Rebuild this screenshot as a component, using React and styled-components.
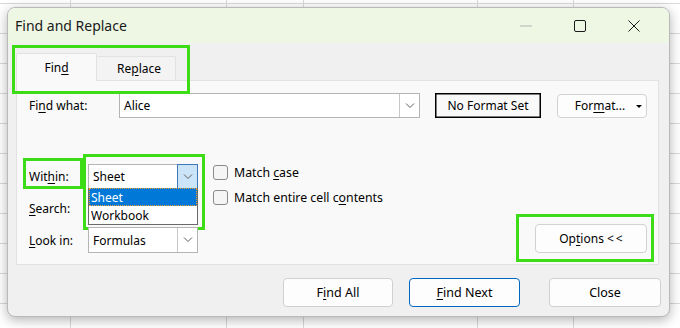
import React from 'react'
import styled, { createGlobalStyle } from 'styled-components'

const GREEN = '#3cdc17'
const FONT = '"Noto Sans", "Open Sans", "DejaVu Sans", sans-serif'

const Global = createGlobalStyle`
    html, body {
        margin: 0;
        padding: 0;
        background: #fff;
    }
    * {
        box-sizing: border-box;
    }
`

const Chevron = () => (
    <svg width='10' height='6' viewBox='0 0 10 6'>
        <polyline points='1,0.5 5,4.5 9,0.5' fill='none' stroke='#5f5f5f' strokeWidth='1' />
    </svg>
)

const App = () => {
    return (
        <Page>
            <Global />
            <Dialog>
                <TitleBar>
                    <Title>Find and Replace</Title>
                    <WinButton>
                        <svg width='12' height='2' viewBox='0 0 12 2'>
                            <line x1='0' y1='1' x2='12' y2='1' stroke='#b3b3b3' strokeWidth='1' />
                        </svg>
                    </WinButton>
                    <WinButton>
                        <svg width='12' height='12' viewBox='0 0 12 12'>
                            <rect x='0.5' y='0.5' width='11' height='11' rx='1.5' fill='none' stroke='#1a1a1a' strokeWidth='1' />
                        </svg>
                    </WinButton>
                    <WinButton last>
                        <svg width='12' height='12' viewBox='0 0 12 12'>
                            <path d='M0.5 0.5 L11.5 11.5 M11.5 0.5 L0.5 11.5' stroke='#1a1a1a' strokeWidth='1' />
                        </svg>
                    </WinButton>
                </TitleBar>

                <Body>
                    <TabStrip>
                        <Tab active>Fin<U>d</U></Tab>
                        <Tab>Re<U>p</U>lace</Tab>
                    </TabStrip>

                    <Panel>
                        <FindRow>
                            <Label width='90px'>Fi<U>n</U>d what:</Label>
                            <Combo width='301px' height='25px'>
                                <ComboValue>Alice</ComboValue>
                                <Arrow><Chevron /></Arrow>
                            </Combo>
                            <NoFormat>No Format Set</NoFormat>
                            <FormatButton>
                                <span>For<U>m</U>at...</span>
                                <Caret />
                            </FormatButton>
                        </FindRow>

                        <Lower>
                            <Fields>
                                <BoxedLabel>Wit<U>h</U>in:</BoxedLabel>
                                <Combo width='110px' height='25px' boxed>
                                    <ComboValue>Sheet</ComboValue>
                                    <Arrow open><Chevron /></Arrow>
                                    <List>
                                        <Item selected>Sheet</Item>
                                        <Item>Workbook</Item>
                                    </List>
                                </Combo>

                                <Label><U>S</U>earch:</Label>
                                <Combo width='110px' height='26px'>
                                    <ComboValue />
                                    <Arrow><Chevron /></Arrow>
                                </Combo>

                                <Label><U>L</U>ook in:</Label>
                                <Combo width='110px' height='26px'>
                                    <ComboValue>Formulas</ComboValue>
                                    <Arrow><Chevron /></Arrow>
                                </Combo>
                            </Fields>

                            <Checks>
                                <CheckRow>
                                    <Box />
                                    <span>Match <U>c</U>ase</span>
                                </CheckRow>
                                <CheckRow>
                                    <Box />
                                    <span>Match entire cell c<U>o</U>ntents</span>
                                </CheckRow>
                            </Checks>

                            <OptionsButton>Op<U>t</U>ions &lt;&thinsp;&lt;</OptionsButton>
                        </Lower>
                    </Panel>

                    <Footer>
                        <Button width='110px'>F<U>i</U>nd All</Button>
                        <Button width='111px' gap='16px' primary><U>F</U>ind Next</Button>
                        <Button width='112px' gap='29px'>Close</Button>
                    </Footer>
                </Body>
            </Dialog>
        </Page>
    )
}

export default App


const Page = styled.div`
    width: 680px;
    height: 328px;
    overflow: hidden;
    padding: 7px 0 0 7px;
    background-color: #fff;
    background-image:
        linear-gradient(to right,
            transparent 0 70px, #d9d9d9 70px 71px,
            transparent 71px 226px, #d9d9d9 226px 227px,
            transparent 227px 303px, #d9d9d9 303px 304px,
            transparent 304px 477px, #d9d9d9 477px 478px,
            transparent 478px 573px, #d9d9d9 573px 574px,
            transparent 574px),
        repeating-linear-gradient(to bottom,
            transparent 0 3px, #d9d9d9 3px 4px, transparent 4px 30px);
`

const Dialog = styled.div`
    width: 663px;
    height: 310px;
    display: flex;
    flex-direction: column;
    border: 1px solid #b9b9b9;
    border-radius: 8px;
    overflow: hidden;
    background: #f0f0f0;
    box-shadow: 0 3px 12px rgba(0, 0, 0, 0.3);
    font-family: ${FONT};
    font-size: 12px;
    color: #000;
`

const TitleBar = styled.div`
    height: 35px;
    flex-shrink: 0;
    display: flex;
    align-items: center;
    padding-left: 7px;
    background: #eef7e4;
`

const Title = styled.div`
    flex: 1;
    font-size: 14px;
    color: #1a1a1a;
`

const WinButton = styled.div`
    width: 54px;
    height: 35px;
    display: flex;
    align-items: center;
    justify-content: center;
    margin-right: ${(p) => (p.last ? '8px' : '0')};
`

const Body = styled.div`
    flex: 1;
    display: flex;
    flex-direction: column;
    padding: 10px 10px 9px 8px;
`

const TabStrip = styled.div`
    position: relative;
    z-index: 1;
    height: 27px;
    display: flex;
    align-items: flex-end;

    &::after {
        content: '';
        position: absolute;
        left: -4px;
        top: -8px;
        width: 172px;
        height: 43px;
        border: 3px solid ${GREEN};
        pointer-events: none;
    }
`

const Tab = styled.div`
    width: ${(p) => (p.active ? '81px' : '79px')};
    height: ${(p) => (p.active ? '28px' : '24px')};
    margin-bottom: ${(p) => (p.active ? '-1px' : '0')};
    display: flex;
    align-items: center;
    justify-content: center;
    padding-left: ${(p) => (p.active ? '0' : '6px')};
    background: ${(p) => (p.active ? '#f9f9f9' : '#f3f3f3')};
    border: 1px solid #e2e2e2;
    border-bottom: none;
    border-left: ${(p) => (p.active ? '1px solid #e2e2e2' : 'none')};
    border-radius: 2px 2px 0 0;
    font-size: 12px;
`

const U = styled.span`
    text-decoration: underline;
    text-underline-offset: 2px;
`

const Panel = styled.div`
    height: 185px;
    display: flex;
    flex-direction: column;
    padding: 12px 11px 11px 12px;
    background: #f9f9f9;
    border: 1px solid #e2e2e2;
`

const FindRow = styled.div`
    display: flex;
    align-items: center;
    height: 25px;
`

const Label = styled.div`
    width: ${(p) => p.width || 'auto'};
    display: flex;
    align-items: center;
    white-space: nowrap;
`

const BoxedLabel = styled(Label)`
    position: relative;

    &::after {
        content: '';
        position: absolute;
        left: -6px;
        top: -6px;
        width: 54px;
        bottom: 0;
        border: 3px solid ${GREEN};
    }
`

const Combo = styled.div`
    position: relative;
    width: ${(p) => p.width};
    height: ${(p) => p.height};
    display: flex;
    background: #fff;
    border: 1px solid #b4b4b4;

    ${(p) => p.boxed && `
        &::after {
            content: '';
            position: absolute;
            left: -6px;
            top: -11px;
            right: -8px;
            bottom: -42px;
            border: 3px solid ${GREEN};
            pointer-events: none;
        }
    `}
`

const ComboValue = styled.div`
    flex: 1;
    display: flex;
    align-items: center;
    padding-left: 4px;
    white-space: nowrap;
    overflow: hidden;
`

const Arrow = styled.div`
    width: 20px;
    display: flex;
    align-items: center;
    justify-content: center;
    border-left: 1px solid #c8c8c8;
    ${(p) => p.open && `
        margin: -1px -1px -1px 0;
        width: 21px;
        background: #cce4f7;
        border: 1px solid #3d79b8;
    `}
`

const List = styled.div`
    position: absolute;
    z-index: 3;
    left: -1px;
    right: -1px;
    top: 100%;
    height: 37px;
    background: #fff;
    border: 1px solid #6a6a6a;
    border-top: none;
`

const Item = styled.div`
    height: 18px;
    display: flex;
    align-items: center;
    padding-left: 2px;
    color: ${(p) => (p.selected ? '#fff' : '#000')};
    background: ${(p) => (p.selected ? '#0078d7' : 'transparent')};
    outline: ${(p) => (p.selected ? '1px dotted #f0a030' : 'none')};
    outline-offset: -1px;
`

const NoFormat = styled.div`
    width: 106px;
    height: 25px;
    margin-left: 15px;
    display: flex;
    align-items: center;
    justify-content: center;
    border: 1px solid #000;
    box-shadow: inset 0 0 0 0.5px #000;
    white-space: nowrap;
`

const FormatButton = styled.div`
    position: relative;
    width: 90px;
    height: 24px;
    margin-left: 16px;
    display: flex;
    align-items: center;
    justify-content: center;
    padding-right: 4px;
    background: #fdfdfd;
    border: 1px solid #d2d2d2;
    border-radius: 4px;
`

const Caret = styled.span`
    position: absolute;
    right: 4px;
    top: 10px;
    width: 0;
    height: 0;
    border-left: 3px solid transparent;
    border-right: 3px solid transparent;
    border-top: 3px solid #000;
`

const Lower = styled.div`
    margin-top: auto;
    display: flex;
    align-items: flex-end;
`

const Fields = styled.div`
    display: grid;
    grid-template-columns: 59px 110px;
    grid-template-rows: 25px 26px 26px;
    row-gap: 6px;
    align-items: stretch;
`

const Checks = styled.div`
    align-self: flex-start;
    margin-left: 15px;
    margin-top: 1px;
    display: flex;
    flex-direction: column;
    gap: 10px;
`

const CheckRow = styled.div`
    display: flex;
    align-items: center;
    gap: 6px;
    height: 15px;
    font-size: 12.3px;
    white-space: nowrap;
`

const Box = styled.span`
    width: 15px;
    height: 15px;
    border: 1px solid #8a8a8a;
    border-radius: 3px;
    background: #f5f5f5;
`

const OptionsButton = styled.div`
    position: relative;
    margin-left: auto;
    width: 112px;
    height: 29px;
    display: flex;
    align-items: center;
    justify-content: center;
    background: #fdfdfd;
    border: 1px solid #d2d2d2;
    border-radius: 4px;

    &::after {
        content: '';
        position: absolute;
        left: -20px;
        top: -11px;
        right: -8px;
        bottom: -10px;
        border: 3px solid ${GREEN};
    }
`

const Footer = styled.div`
    display: flex;
    justify-content: flex-end;
    margin: 13px -2px 0 0;
`

const Button = styled.div`
    width: ${(p) => p.width};
    height: 29px;
    margin-left: ${(p) => p.gap || '0'};
    display: flex;
    align-items: center;
    justify-content: center;
    background: #fdfdfd;
    border: 1px solid ${(p) => (p.primary ? '#0067c0' : '#d0d0d0')};
    border-radius: 4px;
    font-size: 12.5px;
`
